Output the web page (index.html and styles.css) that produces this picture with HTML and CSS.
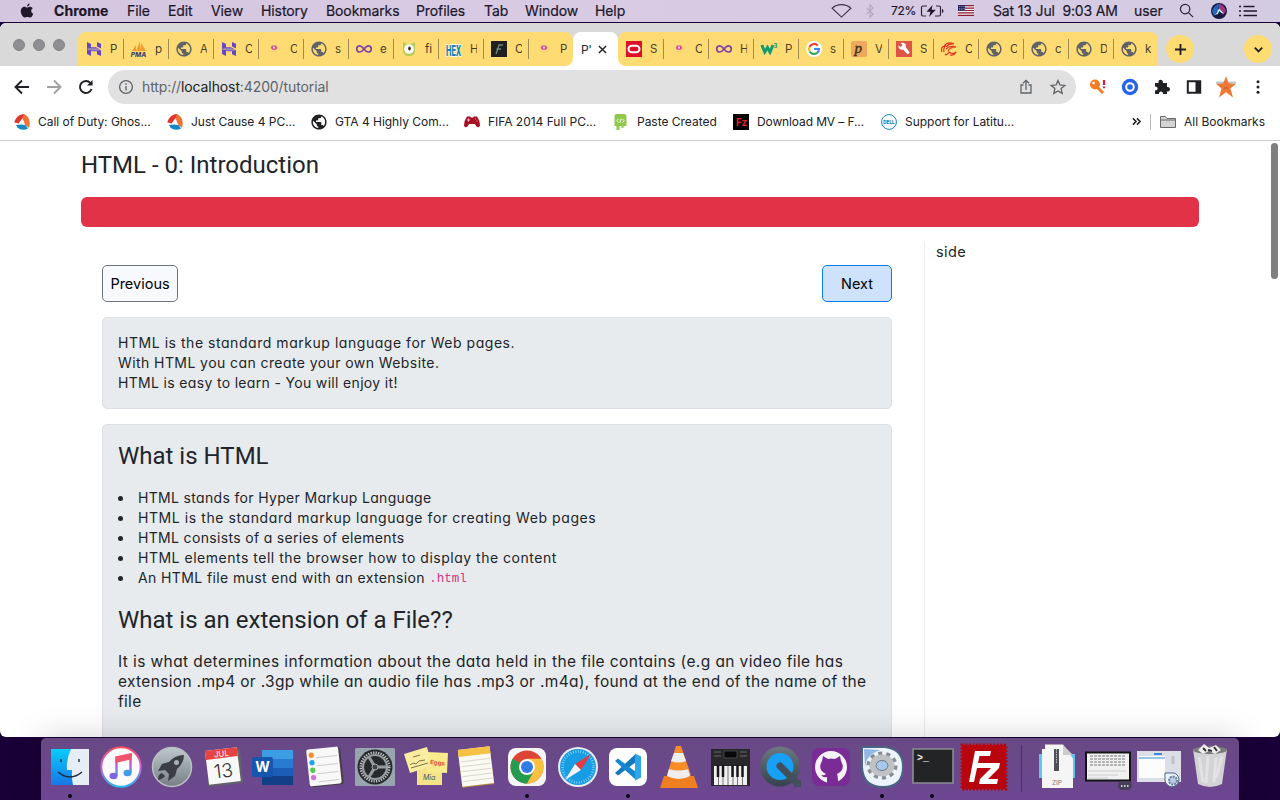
FILE: index.html
```html
<!DOCTYPE html>
<html lang="en">
<head>
<meta charset="utf-8">
<title>Tutorial</title>
<link rel="stylesheet" href="styles.css">
</head>
<body>
<svg class="defs" aria-hidden="true">
  <symbol id="globe" viewBox="1.500 1.500 21 21"><path fill="currentColor" d="M12 2C6.480 2 2 6.480 2 12s4.480 10 10 10 10-4.480 10-10S17.520 2 12 2zm-1 17.930c-3.950-.490-7-3.850-7-7.930 0-.620.080-1.210.210-1.790L9 15v1c0 1.100.900 2 2 2v1.930zm6.900-2.540c-.260-.810-1-1.390-1.900-1.390h-1v-3c0-.550-.450-1-1-1H8v-2h2c.550 0 1-.450 1-1V7h2c1.100 0 2-.900 2-2v-.410c2.930 1.190 5 4.060 5 7.410 0 2.080-.800 3.970-2.100 5.390z"/></symbol>
  <symbol id="hostinger" viewBox="0 0 16 16"><path fill="#6747c7" d="M1 1l4 2v3.200h5L14 8.400H1zM11 1l4 1.800V7.600l-4-2zM1 9l13 .1-3-.1h4v6l-4-1.800v-3H6L1 8.400zM1 9h4v6l-4-2z"/><path d="M1 7.200h10l4 2.200H6z" fill="#9b8cba"/></symbol>
  <symbol id="pink" viewBox="0 0 16 16"><path d="M6 4.500h4l1.400 2.300-1.300 1.900H6L4.700 6.700z" fill="#d84aa6"/><circle cx="8" cy="6.600" r="1.100" fill="#ffe9a0"/><path d="M4.500 10.600h7" stroke="#f8cc80"/></symbol>
  <symbol id="loop" viewBox="0 0 16 16"><path d="M8 8C6.400 5.600 5.200 4.800 3.800 4.800a3 3 0 0 0 0 6.200C5.400 11 6.400 10 8 8s2.600-3.200 4.200-3.200a3 3 0 0 1 0 6.200C10.700 11 9.600 10.400 8 8z" fill="none" stroke="#7b43a5" stroke-width="1.700"/></symbol>
  <symbol id="triple" viewBox="0 0 16 16"><path d="M10 0C5 .5 1.500 3.500 .3 8.500L5 9.500 9.500 4z" fill="#e2362d"/><path d="M10 0c4.500 2 7 7 5 14L11 10.500 8.500 4z" fill="#ef7134"/><path d="M2 11c2 5 8 6 12 3.500L11.500 11 7 10.500z" fill="#1589c6"/><path d="M8.500 4l1 6.500L5 9z" fill="#fff"/></symbol>
</svg>

<header class="menubar">
  <svg class="apple" viewBox="0 0 14 17"><path d="M9.900.5C10 2 8.500 3.700 7 3.700 6.900 2.200 8.400.7 9.900.5zM7.200 4.700c.8 0 1.700-.8 3.100-.8 1 0 2.200.6 2.900 1.600-2.500 1.500-2.100 4.800.5 5.800-.7 1.900-2.100 4.200-3.500 4.200-1 0-1.500-.6-2.800-.6s-1.800.6-2.700.6C2.700 15.500.4 11.800.4 8.600c0-3 1.900-4.700 3.800-4.700 1.300 0 2.200.8 3 .8z"/></svg>
  <nav class="menus"><b>Chrome</b><span>File</span><span>Edit</span><span>View</span><span>History</span><span>Bookmarks</span><span>Profiles</span><span>Tab</span><span>Window</span><span>Help</span></nav>
  <div class="status">
    <svg class="wifi" viewBox="0 0 22 16"><path d="M1 5.500c5.500-5 14.500-5 20 0L11 15z"/></svg>
    <svg class="bt" viewBox="0 0 10 16"><path d="M1 4.500l7.500 7L5 15V1l3.500 3.500L1 11.500"/></svg>
    <span class="pct">72%</span>
    <svg class="batt" viewBox="0 0 24 14"><path d="M7 2H3Q1.500 2 1.500 3.500v7Q1.500 12 3 12h3M16 2h3q1.500 0 1.500 1.500v7q0 1.500-1.500 1.500h-4" fill="none" stroke="#30243c" stroke-width="1.200"/><path d="M12.500 1L6.500 7.800h4L9 13l6.800-7.300h-4.200zM22 5v4q1.500-.5 1.500-2T22 5z" fill="#20172b"/></svg>
    <svg class="flag" viewBox="0 0 16 11"><path d="M0 0h16v11H0z" fill="#f4eef0"/><path d="M0 .7h16M0 3.100h16M0 5.500h16M0 7.900h16M0 10.300h16" stroke="#8e1d35" stroke-width="1.200"/><path d="M0 0h7v6H0z" fill="#28275c"/><path d="M1 1.500h6M1 3.500h6M1 5h6" stroke="#c9c6dc" stroke-width=".7" stroke-dasharray=".8 1"/></svg>
    <span class="date">Sat 13 Jul&nbsp; 9:03 AM</span><span class="user">user</span>
    <svg class="search" viewBox="0 0 16 16"><circle cx="6.500" cy="6.500" r="5"/><path d="M10.200 10.200L15 15"/></svg>
    <svg class="siri" viewBox="0 0 16 16"><circle cx="8" cy="8" r="8" fill="#19183f"/><path d="M1 8C3 3 6 1 8 1l-1 7-4 5z" fill="#2468bc"/><path d="M8 1c4 0 6 4 7 7l-3 4-4-5z" fill="#a33283"/><path d="M3.500 12q3-2 3.500-5l1.200-1.500L10 7.500l3 3-3-.8L8.300 8 7 11z" fill="#bdf1ee"/></svg>
    <svg class="list" viewBox="0 0 18 12"><path d="M0 1.500h2M0 6h2M0 10.500h2M4.500 1.500h11M4.500 6h13.500M4.500 10.500h13.500"/></svg>
  </div>
</header>

<main class="window">
  <div class="tabstrip">
    <div class="lights"><i></i><i></i><i></i></div>
    <div class="tabs left">
      <div class="tab"><svg><use href="#hostinger"/></svg><span>P</span></div>
      <div class="tab"><svg viewBox="0 0 16 16"><path d="M1 10l4-6v6zM5 10l4-10v10zM9 10l1-8 5 8z" fill="#f29b31"/><text x="-.2" y="15.500" font-size="6.500" font-weight="800" font-style="italic" fill="#3f4270">PMA</text></svg><span>p</span></div>
      <div class="tab"><svg><use href="#globe"/></svg><span>A</span></div>
      <div class="tab"><svg><use href="#hostinger"/></svg><span>C</span></div>
      <div class="tab"><svg><use href="#pink"/></svg><span>C</span></div>
      <div class="tab"><svg><use href="#globe"/></svg><span>s</span></div>
      <div class="tab"><svg><use href="#loop"/></svg><span>e</span></div>
      <div class="tab"><svg viewBox="0 0 16 16"><path d="M2 1l4 2h4l4-2v8q0 6-6 6T2 9z" fill="#b6cb57"/><circle cx="8" cy="8" r="4.800" fill="#fff"/><ellipse cx="8.500" cy="7.500" rx="1.300" ry="2" fill="#252d20"/></svg><span>fi</span></div>
      <div class="tab"><svg viewBox="0 0 16 16"><text transform="translate(0 15) scale(.6 1.250)" font-size="12" font-weight="800" fill="#147eb5" stroke="#fff" stroke-width="1.300" paint-order="stroke">HEX</text></svg><span>H</span></div>
      <div class="tab"><svg viewBox="0 0 16 16"><path d="M0 0h16v16H0z" fill="#202020"/><path d="M5 13l3-9h4M5.500 8H10" fill="none" stroke="#718b76" stroke-width="1.300"/></svg><span>C</span></div>
      <div class="tab"><svg><use href="#pink"/></svg><span>P</span></div>
    </div>
    <div class="tab-active"><span>P'</span><svg viewBox="0 0 10 10"><path d="M1 1l8 8M9 1L1 9"/></svg></div>
    <div class="tabs right">
      <div class="tab"><svg viewBox="0 0 16 16"><path d="M0 0h16v16H0z" fill="#dc1026"/><rect x="2.500" y="4.700" width="11" height="6.600" rx="3.300" fill="none" stroke="#fff" stroke-width="2"/></svg><span>S</span></div>
      <div class="tab"><svg><use href="#pink"/></svg><span>C</span></div>
      <div class="tab"><svg><use href="#loop"/></svg><span>H</span></div>
      <div class="tab"><svg viewBox="0 0 16 16"><path d="M.8 4l3 7L6.500 6.500 9 11l3-7" fill="none" stroke="#109b70" stroke-width="3"/><text x="12.500" y="6.500" font-size="6" font-weight="700" fill="#109b70">3</text></svg><span>P</span></div>
      <div class="tab"><svg viewBox="0 0 16 16"><circle cx="8" cy="8" r="8" fill="#fff"/><g fill="none" stroke-width="2.200"><path d="M11.700 4.500A5 5 0 0 0 3.500 6" stroke="#e94335"/><path d="M3.500 6a5 5 0 0 0 .2 4.500" stroke="#fbbc05"/><path d="M3.700 10.500a5 5 0 0 0 7.500 1.300" stroke="#34a853"/><path d="M11.200 11.800A5 5 0 0 0 13 8H8" stroke="#4285f4"/></g></svg><span>s</span></div>
      <div class="tab"><svg viewBox="0 0 16 16"><rect width="16" height="16" rx="2" fill="#efa75e"/><text x="3.500" y="11.500" font-size="15" font-style="italic" font-family="Liberation Serif, serif" fill="#3e3222" stroke="#3e3222" stroke-width=".4">p</text></svg><span>V</span></div>
      <div class="tab"><svg viewBox="0 0 16 16"><path d="M0 0h16v16H0z" fill="#e05448"/><path d="M2.500 4.500L5 6l1.500-2-2-2C9 .5 10.500 4 9.700 6l4 5.500-2 2L7 8.500C4 9.500 2 7 2.500 4.500z" fill="#fff"/></svg><span>S</span></div>
      <div class="tab"><svg viewBox="0 0 16 16"><path d="M3 5Q7 0 13 3 8 2 5 6M1 11Q-1 6 4 5 2 8 3 11M5 8q4-4 10-2-6 0-8 4M4 13q2 2 4-2 4 3 7 0-2 4-6 3" fill="none" stroke="#e23420" stroke-width="1.200"/></svg><span>C</span></div>
      <div class="tab"><svg><use href="#globe"/></svg><span>C</span></div>
      <div class="tab"><svg><use href="#globe"/></svg><span>c</span></div>
      <div class="tab"><svg><use href="#globe"/></svg><span>D</span></div>
      <div class="tab"><svg><use href="#globe"/></svg><span>k</span></div>
    </div>
    <button class="round plus"><svg viewBox="0 0 14 14"><path d="M7 1v12M1 7h12"/></svg></button>
    <button class="round chev"><svg viewBox="0 0 14 14"><path d="M3 5l4 4 4-4"/></svg></button>
  </div>

  <div class="toolbar">
    <svg class="nav" viewBox="0 0 16 16"><path d="M15 8H2M8 1.500L1.500 8 8 14.500"/></svg>
    <svg class="nav dim" viewBox="0 0 16 16"><path d="M1 8h13M8 1.500L14.500 8 8 14.500"/></svg>
    <svg class="nav" viewBox="0 0 16 16"><path d="M13.600 10A6 6 0 1 1 12.500 4L14 5.500"/><path d="M14.500 1v5.500H9z" fill="#202124" stroke="none"/></svg>
    <div class="omnibox">
      <svg class="info" viewBox="0 0 16 16"><circle cx="8" cy="8" r="6.400"/><path d="M8 7v4.500M8 4.300V6"/></svg>
      <span class="url">http://<em>localhost</em>:4200/tutorial</span>
      <svg class="share" viewBox="0 0 16 16"><path d="M5.500 6H3v8h10V6h-2.500M8 11V1.500M5 4.300l3-3 3 3"/></svg>
      <svg class="star" viewBox="0 0 16 16"><path d="M8 1.500l1.900 4.500 4.900.400-3.700 3.200 1.100 4.800L8 11.900l-4.200 2.500 1.100-4.800L1.200 6.400 6.100 6z"/></svg>
    </div>
    <div class="ext">
      <svg viewBox="0 0 18 18"><circle cx="6" cy="6.500" r="5" fill="#f57d26"/><circle cx="4.500" cy="5" r="1.300" fill="#fff"/><path d="M8 9l6 6" stroke="#f57d26" stroke-width="3"/><path d="M15 2v5M15 8.500v1.800" stroke="#d51c3a" stroke-width="2.200"/></svg>
      <svg viewBox="0 0 18 18"><circle cx="9" cy="9" r="8.200" fill="#2864e8"/><circle cx="9" cy="9" r="3.800" fill="none" stroke="#fff" stroke-width="2"/></svg>
      <svg viewBox="0 0 18 18"><path d="M2 5h3.500c-1-4.500 5-4.500 4.500 0h4v4c4-1 4 5 0 4.500V16h-4c.5-3.500-4.500-3.500-4 0H2v-3.500c3.500 0 3.500-4 0-4z" fill="#202124"/></svg>
      <svg viewBox="0 0 18 18"><path d="M2.800 3.300h12.400v11.400H2.800z" fill="#fff" stroke="#202124" stroke-width="2"/><path d="M10.500 3h5v12h-5z" fill="#202124"/></svg>
      <svg class="patrick" viewBox="0 0 22 22"><path d="M1 5.500h20v2H1z" fill="#b5cbd1"/><path d="M11 0l2.700 7.200 7.300.600-5.600 4.800L18 21.500l-7-5.300-7 5.300 2.500-8.900L1 7.800l7.300-.600z" fill="#ef7836"/><path d="M9 12h4" stroke="#ae5b3e"/></svg>
      <svg viewBox="0 0 18 18"><g fill="#202124"><circle cx="9" cy="3.700" r="1.500"/><circle cx="9" cy="9" r="1.500"/><circle cx="9" cy="14.300" r="1.500"/></g></svg>
    </div>
  </div>

  <div class="bookmarks">
    <div><svg><use href="#triple"/></svg><span>Call of Duty: Ghos...</span></div>
    <div><svg><use href="#triple"/></svg><span>Just Cause 4 PC...</span></div>
    <div class="dark"><svg><use href="#globe"/></svg><span>GTA 4 Highly Com...</span></div>
    <div><svg viewBox="0 0 16 16"><path d="M3 2.500h3l1 1h2l1-1h3q3 4 3 9c-1.500 3.500-4 1-5-1.500H5C4 12.500 1.500 15 0 11.500q0-5 3-9z" fill="#a80f22"/><path d="M3 6h3M4.500 4.500v3" stroke="#f5c9ce"/><path d="M11 5h1M12.500 7h1" stroke="#e6a4ac" stroke-width="1.200"/></svg><span>FIFA 2014 Full PC...</span></div>
    <div><svg viewBox="0 0 16 16"><path d="M3.500 0h8q2 0 2 2v10h-3v2H8.500v-2h-2v4h-3v-4h-2V2q0-2 2-2z" fill="#91c94e"/><path d="M5.500 5L3.800 6.800 5.500 8.500M9.500 5l1.700 1.800L9.500 8.500M8.200 4.500L6.800 9" fill="none" stroke="#f3fae9"/></svg><span>Paste Created</span></div>
    <div><svg viewBox="0 0 16 16"><path d="M0 0h16v16H0z"/><text x="3" y="12" font-size="10" font-weight="700" fill="#e8202b" textLength="11" lengthAdjust="spacingAndGlyphs">Fz</text></svg><span class="mv">Download MV – F...</span></div>
    <div><svg viewBox="0 0 16 16"><circle cx="8" cy="8" r="7.400" fill="#fff" stroke="#1686b8"/><text x="2.200" y="9.800" font-size="5" font-weight="800" fill="#1686b8" textLength="11.600" lengthAdjust="spacingAndGlyphs">DELL</text></svg><span>Support for Latitu...</span></div>
    <div class="all"><svg class="more" viewBox="0 0 10 10"><path d="M1 1.500L4.500 5 1 8.500M5.500 1.500L9 5 5.500 8.500"/></svg><i></i><svg class="folder" viewBox="0 0 16 14"><path d="M.5 12.500v-11h5l1.500 2h8.500v9zM.5 5h15" fill="#d4d4d4" stroke="#686868"/></svg><span>All Bookmarks</span></div>
  </div>

  <section class="page">
    <h1>HTML - 0: Introduction</h1>
    <div class="banner"></div>
    <div class="columns">
      <article>
        <div class="pager"><button class="prev">Previous</button><button class="next">Next</button></div>
        <div class="card intro"><p><span>HTML is the standard markup language for Web pages.</span><span>With HTML you can create your own Website.</span><span>HTML is easy to learn - You will enjoy it!</span></p></div>
        <div class="card body">
          <h2>What is HTML</h2>
          <ul>
            <li>HTML stands for Hyper Markup Language</li>
            <li>HTML is the standard markup language for creating Web pages</li>
            <li>HTML consists of a series of elements</li>
            <li>HTML elements tell the browser how to display the content</li>
            <li>An HTML file must end with an extension <code>.html</code></li>
          </ul>
          <h2>What is an extension of a File??</h2>
          <p class="big"><span>It is what determines information about the data held in the file contains (e.g an video file has</span><span>extension .mp4 or .3gp while an audio file has .mp3 or .m4a), found at the end of the name of the</span><span>file</span></p>
        </div>
      </article>
      <aside>side</aside>
    </div>
    <div class="scrollbar"></div>
  </section>
</main>

<footer class="dock">
  <div class="app run"><svg viewBox="0 0 44 44"><defs><linearGradient id="fb" x2="0" y2="1"><stop stop-color="#08cdf9"/><stop offset="1" stop-color="#1977e8"/></linearGradient></defs><path d="M3 4h38v36H3z" fill="#e7edf4"/><path d="M3 4h20q-5 10-4 21h5q-.5 8 1 15H3z" fill="url(#fb)"/><path d="M13 14v3M31 14v3M10 27q12 10 24 0" fill="none" stroke="#1c2a3d" stroke-width="1.400"/></svg></div>
  <div class="app"><svg viewBox="0 0 44 44"><defs><linearGradient id="mu" x2="0" y2="1"><stop stop-color="#fb4c5e"/><stop offset=".5" stop-color="#c85ed7"/><stop offset="1" stop-color="#26b8ee"/></linearGradient></defs><circle cx="22" cy="22" r="19.700" fill="#fafafa" stroke="url(#mu)" stroke-width="2"/><path d="M17.500 31V12.500l14-3V28" fill="none" stroke="url(#mu)" stroke-width="2.500"/><path d="M16.300 12l16.500-3.800v6L16.300 18z" fill="#f0566f"/><ellipse cx="14.500" cy="31" rx="4" ry="3.200" fill="#8066dd"/><ellipse cx="28.500" cy="28" rx="4" ry="3.200" fill="#419be8"/></svg></div>
  <div class="app"><svg viewBox="0 0 44 44"><defs><linearGradient id="la" x2="0" y2="1"><stop stop-color="#bdc9cd"/><stop offset="1" stop-color="#777f82"/></linearGradient></defs><circle cx="22" cy="22" r="19.500" fill="url(#la)" stroke="#b9bec2" stroke-width="1.500"/><path d="M34 10q-9 0-15 7l-7 2-4 7 7-1 4 4-1 7 7-5 2-7q7-6 7-14zM12 28q-4 1-4 7 5-1 7-4z" fill="#3b3e42"/><circle cx="26.500" cy="17.500" r="2.500" fill="#a8b2b5"/></svg></div>
  <div class="app"><svg viewBox="0 0 44 44"><g transform="rotate(-7 22 22)"><path d="M7 6h34l-1 34H5z" fill="#616369"/><path d="M6 4h32v34H6z" fill="#f8f8f8"/><path d="M6 4h32v9H6z" fill="#e64443"/><text x="22" y="11.500" text-anchor="middle" font-size="8" fill="#fff">JUL</text><text x="22" y="32.500" text-anchor="middle" font-size="19" font-weight="300" fill="#353535">13</text></g></svg></div>
  <div class="app"><svg viewBox="0 0 44 44"><path d="M11 5h31v9H11z" fill="#3c9de5"/><path d="M11 14h31v9H11z" fill="#297ad1"/><path d="M11 23h31v8H11z" fill="#1b5db7"/><path d="M11 31h31v9H11z" fill="#123f86"/><rect x="1" y="12" width="21" height="20" rx="2" fill="#1756ae"/><text x="11.500" y="27" text-anchor="middle" font-size="14" font-weight="700" fill="#fff">W</text></svg></div>
  <div class="app"><svg viewBox="0 0 44 44"><g transform="rotate(-6 22 22)"><rect x="7" y="4" width="33" height="37" rx="2" fill="#454046"/><rect x="6" y="3" width="32" height="37" rx="2" fill="#f8f8f8"/><path d="M15 12h21M15 20h21M15 28h21M15 36h21" stroke="#ccc"/><circle cx="10.500" cy="9" r="2.700" fill="#f58e2e"/><circle cx="10.500" cy="16.500" r="2.700" fill="#21a5e8"/><circle cx="10.500" cy="24" r="2.700" fill="#53ca4c"/><circle cx="10.500" cy="31.500" r="2.700" fill="#cb75db"/></g></svg></div>
  <div class="app"><svg viewBox="0 0 44 44"><rect x="2" y="3" width="40" height="38" rx="1.500" fill="#99a5ae"/><circle cx="22" cy="22" r="17.500" fill="#262a2d"/><circle cx="22" cy="22" r="14.300" fill="none" stroke="#c3c6c8" stroke-width="2.500" stroke-dasharray="1.300 1.200"/><circle cx="22" cy="22" r="12" fill="none" stroke="#9a9ea1" stroke-width="2.200"/><path d="M22 22l-6-10M22 22h12M22 22l-6 10" stroke="#999da0" stroke-width="3"/><circle cx="22" cy="22" r="3" fill="#444" stroke="#aaa"/></svg></div>
  <div class="app"><svg viewBox="0 0 44 44"><path d="M13 22h25v18H13z" fill="#f4e487"/><path d="M23 7l21 1-1 20-20-1z" fill="#f8eb8d"/><path d="M0 9l23-7 5 19-22 7z" fill="#faeca1"/><path d="M9 12l7-2M6 20l3-2 3 1 3-3 6-1M7 23l17-5" fill="none" stroke="#797248"/><text x="26" y="19" font-size="6" font-weight="700" fill="#e64b31" transform="rotate(6 26 19)">Eggs</text><text x="19" y="35" font-size="7" font-style="italic" fill="#47536d">Mia</text></svg></div>
  <div class="app"><svg viewBox="0 0 44 44"><g transform="rotate(-7 22 22)"><path d="M6 5h32v36H6z" fill="#b28a3c"/><path d="M6 3h32v37H6z" fill="#fbfaf2"/><path d="M6 3h32v7H6z" fill="#f5c142"/><path d="M7 15h30M7 20h30M7 25h30M7 30h30M7 35h30" stroke="#d9d7ce"/></g></svg></div>
  <div class="app run"><svg viewBox="0 0 44 44"><rect x="3" y="3" width="38" height="38" rx="8" fill="#f5f5f5"/><circle cx="22" cy="22" r="16.500" fill="#df4537"/><path d="M22 22L7.700 13.800A16.500 16.500 0 0 0 22 38.500L29 26z" fill="#249c50"/><path d="M22 22l7 4-7 12.500A16.500 16.500 0 0 0 36.300 13.800H22z" fill="#f9c13d"/><circle cx="22" cy="22" r="8" fill="#fff"/><circle cx="22" cy="22" r="6" fill="#317be4"/></svg></div>
  <div class="app"><svg viewBox="0 0 44 44"><circle cx="22" cy="22" r="20" fill="#e9edf1"/><circle cx="22" cy="22" r="18" fill="#189de5"/><circle cx="22" cy="22" r="15.500" fill="none" stroke="#91daf7" stroke-width="2.500" stroke-dasharray=".8 1.700"/><path d="M35 9L19 19l6 6z" fill="#e5393e"/><path d="M9 35l10-16 6 6z" fill="#f2f4f5"/></svg></div>
  <div class="app run"><svg viewBox="0 0 44 44"><rect x="3" y="3" width="38" height="38" rx="8" fill="#fff"/><path d="M29 9.500L9 28l3 2.500 18-13.500z" fill="#1579bd"/><path d="M9 16l3-2.500L30 27v8z" fill="#1686cf"/><path d="M29 8.500l6 3v21l-6 3z" fill="#2ca5e9"/></svg></div>
  <div class="app"><svg viewBox="0 0 44 44"><path d="M7 31h30l4 12H3z" fill="#f07f22"/><path d="M19 1h5l10 29q-12 8-24 0z" fill="#f78c28"/><path d="M17 8h9l3 8q-7 3-15 0zM12 24q9 3 19 0l2 7q-11 6-23 0z" fill="#eee"/></svg></div>
  <div class="app"><svg viewBox="0 0 44 44"><path d="M3 4h39v37H3z" fill="#28282b"/><path d="M6 21h33v19H6z" fill="#f0f0f0"/><path d="M10.500 21v19M15 21v19M20 21v19M25 21v19M29.500 21v19M34.500 21v19" stroke="#777"/><path d="M10 20v12M15 20v12M24.500 20v12M29.500 20v12M34.500 20v12" stroke="#171717" stroke-width="2.500"/><path d="M16 6h13v7H16z" fill="#08080a" stroke="#444"/><path d="M6 7h7M6 11h7M32 7h7M32 11h7" stroke="#484848" stroke-width="2"/></svg></div>
  <div class="app"><svg viewBox="0 0 44 44"><defs><linearGradient id="qt" x2="0" y2="1"><stop stop-color="#6d7880"/><stop offset="1" stop-color="#35424d"/></linearGradient></defs><circle cx="21" cy="21.500" r="20" fill="url(#qt)"/><circle cx="21" cy="21.500" r="13.500" fill="#18a0f6"/><path d="M21 21l17 17" stroke="#434f5a" stroke-width="7" stroke-linecap="round"/><path d="M35 35h7v7h-7z" fill="#434f5a"/></svg></div>
  <div class="app"><svg viewBox="0 0 44 44"><rect x="3" y="3" width="38" height="38" rx="7" fill="#7a2b96"/><circle cx="22" cy="22" r="16" fill="#f6f2f8"/><path d="M18 38v-6q-4 1-6-2 3 1 5-1-9-4-4-13l1-5 5 3q3-1 7 0l5-3 1 5q5 9-4 13 1 2 1 9z" fill="#7a2b96"/></svg></div>
  <div class="app run"><svg viewBox="0 0 44 44"><path d="M2 2h23q18 2 18 20 0 20-20 20Q3 42 2 22z" fill="#edf3fa" stroke="#496582" stroke-width="2"/><path d="M4 4l16 1Q6 10 5 22z" fill="#92b7e5"/><ellipse cx="22" cy="20.500" rx="13.500" ry="12" fill="none" stroke="#858b90" stroke-width="4" stroke-dasharray="4 4"/><ellipse cx="22" cy="20.500" rx="9.500" ry="8" fill="#c4daf3" stroke="#bfc2c5" stroke-width="6"/><ellipse cx="22" cy="20.500" rx="6" ry="5" fill="#a9c6eb" stroke="#6d7780"/></svg></div>
  <div class="app run"><svg viewBox="0 0 44 44"><path d="M2 4h40v34H2z" fill="#232425" stroke="#8b8c91" stroke-width="1.600"/><text x="6" y="16" font-size="10" font-weight="700" font-family="Liberation Mono, monospace" fill="#eee">&gt;_</text></svg></div>
  <div class="app"><svg class="fz" viewBox="0 0 48 48"><path d="M2 2h44v44H2z" fill="#b8050d" stroke="#b8050d" stroke-width="3" stroke-dasharray="2 1.500"/><path d="M9 39l6-31h16l-1 5H19.500L18 20h9l-1 5h-9l-3 14zM23 20h17l-1 5-11 11h10l-1 5H19l1-5 11-11h-9z" fill="#fff"/></svg></div>
  <div class="rule"></div>
  <div class="app wide"><svg viewBox="0 0 44 44"><path d="M4 9h36v24H4z" fill="#5cc6ed"/><path d="M10-.5h18l10 14V43H7V4h3z" fill="#f5f5f5"/><path d="M28 0v10h10z" fill="#ccc"/><path d="M19 4h5v22h-5z" fill="#4e5254"/><path d="M21.500 4v14" stroke="#bbb" stroke-dasharray="1.500 1"/><text x="22" y="40" text-anchor="middle" font-size="6.500" fill="#777">ZIP</text></svg></div>
  <div class="app wide"><svg class="shot" viewBox="0 0 48 44"><path d="M2 7.500h44v28H2z" fill="#f0f0f0" stroke="#141414" stroke-width="2"/><path d="M6 11h36M6 14h36M6 17h36M6 20h36" stroke="#b5b5b5" stroke-width="2" stroke-dasharray="3 1"/><path d="M4 26h38M4 30h30M4 33h20" stroke="#ccc"/><rect x="34" y="36" width="14" height="9" rx="4.500" fill="#493e58"/><path d="M37 41h8" stroke="#fff" stroke-width="1.300" stroke-dasharray="1.500 1.500"/></svg></div>
  <div class="app wide"><svg class="shot" viewBox="0 0 48 44"><path d="M2 6h44v31H2z" fill="#dcdfe5"/><path d="M4 11h26v22H4z" fill="#fcfcfd"/><path d="M19 9h8" stroke="#3d89de" stroke-width="2"/><path d="M4 13h26" stroke="#9ac4e8" stroke-width="2"/><path d="M38 11v8" stroke="#bbc0c8" stroke-width="3"/><path d="M30 28h9a7 7 0 1 1-9 7z" fill="#edf4fa" stroke="#486486"/><circle cx="38" cy="35.500" r="4" fill="#b5cce7" stroke="#6b7d91" stroke-width="2" stroke-dasharray="2 1"/></svg></div>
  <div class="app wide"><svg viewBox="0 0 44 44"><path d="M5 4h34l-5 35q-12 6-24 0z" fill="#d3d2d4"/><ellipse cx="22" cy="5" rx="17" ry="4" fill="#79797b"/><path d="M10 5l6-6 5 4 7-3 5 5-6 4-6-3-6 3z" fill="#eee"/><path d="M15 3l3 3M26 2l3 4M20 5l4 1" stroke="#333" stroke-width="2"/><path d="M11 12l4 25M20 11l-2 27M28 13l-2 24M34 11l-6 22" stroke="#e2e1e3" stroke-width="3"/></svg></div>
</footer>
</body>
</html>
```

FILE: styles.css
```css
* { box-sizing: border-box; }
body {
  margin: 0; width: 1280px; height: 800px; overflow: hidden;
  display: flex; flex-direction: column; align-items: center;
  background: #190137; color: #212529;
  font-family: Inter, "Liberation Sans", sans-serif;
}
svg { display: block; flex: none; overflow: visible; }
.defs { position: absolute; width: 0; height: 0; }
button { font: inherit; padding: 0; }

/* Menu bar */
.menubar {
  width: 1280px; height: 22px; flex: none; display: flex; align-items: center; padding-bottom: 1px;
  background: linear-gradient(90deg, #d5c6df, #d8cbe3 50%, #d3cbe2); color: #20172b; font-size: 14px;
  -webkit-text-stroke: .2px;
}
.apple { width: 14px; height: 16px; margin-left: 20px; fill: #20172b; }
.menus {
  margin-left: 20px; display: grid; white-space: nowrap;
  grid-template-columns: 73px 41px 43px 50px 65px 90px 68px 41px 70px 40px;
}
.menus b { letter-spacing: .05px; }
.menus span { letter-spacing: -.1px; }
.status { margin-left: auto; display: flex; align-items: center; white-space: nowrap; }
.wifi { width: 21px; height: 15px; fill: none; stroke: #3b3047; stroke-width: 1.2; }
.bt { width: 10px; height: 14px; margin-left: 13px; fill: none; stroke: #afa3bc; stroke-width: 1.2; }
.pct { width: 29px; margin-left: 16px; font-size: 12px; letter-spacing: -.3px; }
.batt { width: 24px; height: 14px; }
.flag { width: 16px; height: 11px; margin-left: 14px; }
.date { width: 126px; margin-left: 19px; letter-spacing: -.15px; }
.user { width: 29px; margin-left: 15px; letter-spacing: -.1px; }
.search { width: 15px; height: 15px; margin-left: 16px; fill: none; stroke: #30243c; stroke-width: 1.3; }
.siri { width: 16px; height: 16px; margin-left: 17px; }
.list { width: 18px; height: 12px; margin: 0 23px 0 12px; stroke: #20172b; stroke-width: 1.6; }

/* Browser window */
.window {
  width: 1280px; height: 714px; margin-top: 1px; flex: none; display: flex; flex-direction: column;
  background: #fff; border-radius: 6px; overflow: hidden;
}
.tabstrip {
  height: 43px; flex: none; display: flex; align-items: flex-end;
  background: linear-gradient(#fff, #fff) 564px 25px / 64px 18px no-repeat, #d9d9d9;
}
.lights { width: 78px; height: 43px; padding-left: 13px; display: flex; gap: 8px; align-items: center; }
.lights i { width: 12px; height: 12px; border-radius: 50%; background: #8f8e93; border: 1px solid #838287; }
.tabs { height: 34px; display: flex; background: #ffdc73; border-radius: 8px; }
.left { border-bottom-left-radius: 0; }
.right { border-bottom-right-radius: 0; }
.tab { width: 45px; height: 34px; display: flex; align-items: center; padding-left: 8px; position: relative; }
.tab svg { width: 16px; height: 16px; color: #5f6368; }
.tab span { width: 7px; margin-left: 8px; overflow: hidden; font-size: 11.5px; color: #45402c; white-space: nowrap; }
.tab + .tab::before { content: ""; position: absolute; left: 0; top: 7px; width: 1px; height: 20px; background: #a08b50; }
.tab-active {
  width: 45px; height: 34px; display: flex; align-items: center; gap: 8px; padding-left: 8px;
  background: #fff; border-radius: 8px 8px 0 0; font-size: 12px;
}
.tab-active span { width: 10px; white-space: nowrap; letter-spacing: -.3px; }
.tab-active svg { width: 9px; height: 9px; margin-left: -1px; stroke: #202124; stroke-width: 1.6; }
.round {
  width: 28px; height: 28px; border: 0; border-radius: 50%; background: #ffdc73;
  display: grid; place-items: center; margin-bottom: 3px;
}
.round svg { width: 13px; height: 13px; fill: none; stroke: #202124; stroke-width: 2; }
.plus { margin-left: 8px; }
.chev { margin-left: auto; margin-right: 8px; }

.toolbar { height: 42px; flex: none; display: flex; align-items: center; }
.nav { width: 16px; height: 16px; margin-left: 14px; margin-right: 2px; fill: none; stroke: #202124; stroke-width: 1.9; }
.dim { stroke: #a0a0a0; }
.omnibox {
  width: 968px; height: 34px; margin-left: 12px; border-radius: 17px; background: #e1e1e1;
  display: flex; align-items: center; padding: 0 10px;
}
.omnibox svg { width: 16px; height: 16px; fill: none; stroke: #5f6368; stroke-width: 1.3; }
.url { margin-left: 8px; margin-top: -1px; font-size: 14px; color: #5f6368; letter-spacing: -.11px; }
.url em { font-style: normal; color: #202124; }
.omnibox .share { margin-left: auto; }
.omnibox .star { margin-left: 16px; }
.ext { display: flex; align-items: center; gap: 14px; margin-left: 13px; }
.ext svg { width: 18px; height: 18px; }
.ext .patrick { width: 22px; height: 22px; margin: 0 -2px; }

.bookmarks {
  height: 33px; flex: none; border-bottom: 1px solid #cacaca; padding: 0 15px 5px 14px;
  display: grid; grid-template-columns: 153px 144px 153px 149px 120px 148px 140px 1fr; align-items: center;
  font-size: 12px; color: #202124; white-space: nowrap; letter-spacing: -.02px;
}
.bookmarks div { display: flex; align-items: center; }
.bookmarks svg { width: 16px; height: 16px; }
.bookmarks span { margin-left: 8px; }
.bookmarks .mv { letter-spacing: -.12px; }
.dark { color: #202124; }
.bookmarks .all { justify-content: flex-end; }
.bookmarks .more { width: 9px; height: 9px; fill: none; stroke: #202124; stroke-width: 1.7; }
.all i { width: 1px; height: 16px; background: #bbb; margin: 0 9px; }
.bookmarks .folder { height: 14px; }

/* Page */
.page { position: relative; flex: 1; min-height: 0; overflow: hidden; padding: 9px 81px 0; font-feature-settings: "cv11"; }
h1, h2 { font-family: Roboto, sans-serif; font-size: 24px; font-weight: 400; line-height: 30px; margin: 0; }
.banner { height: 30px; margin: 17px 0 15px; border-radius: 6px; background: #e23247; }
.columns { display: flex; height: 520px; }
article { width: 843px; padding: 23px 32px 0 21px; }
aside { flex: 1; border-left: 1px solid #ebedef; padding: 0 11px; font-size: 14.5px; line-height: 20px; letter-spacing: .4px; }
.pager { display: flex; justify-content: space-between; }
.pager button { height: 37px; border-radius: 5px; color: #000; font-size: 14.5px; }
.prev { width: 76px; background: #f8f9fc; border: 1px solid #6c757d; }
.next { width: 70px; background: #cfe2fc; border: 1px solid #0d78ee; }
.card { background: #e8ebee; border: 1px solid #dce0e4; border-radius: 5px; padding: 15px; margin-top: 15px; }
.card p, .card ul { margin: 0; font-size: 14px; line-height: 20px; letter-spacing: .3px; white-space: nowrap; }
.card p span { display: block; }
.card.body { height: 400px; padding-top: 16px; }
.card ul { padding: 0; list-style: none; margin: 17px 0; }
.card li { height: 20px; display: flex; align-items: center; white-space: pre; }
.card li::before { content: ""; width: 5px; height: 5px; margin-right: 15px; border-radius: 50%; background: #212529; }
.card .big { margin-top: 17px; font-size: 15.5px; }

/* Tracking per line */
.intro span:nth-child(1) { letter-spacing: .54px; }
.intro span:nth-child(2) { letter-spacing: .42px; }
.intro span:nth-child(3) { letter-spacing: .33px; }
.card li:nth-child(1) { letter-spacing: .33px; }
.card li:nth-child(2) { letter-spacing: .58px; }
.card li:nth-child(3) { letter-spacing: .33px; }
.card li:nth-child(4) { letter-spacing: .51px; }
.card li:nth-child(5) { letter-spacing: .39px; }
.big span:nth-child(1) { letter-spacing: .4px; }
.big span:nth-child(2) { letter-spacing: .33px; }
code { padding-top: 2px; color: #d63384; font-family: "Liberation Mono", monospace; font-size: 12.5px; letter-spacing: 0; }
.scrollbar { position: absolute; right: 2px; top: 2px; width: 7px; height: 136px; border-radius: 4px; background: #7f7f7f; }

/* Dock */
.dock {
  position: relative; width: 1198px; height: 62px; margin-top: 1px; flex: none; display: flex; padding: 6px 4px 0;
  background: linear-gradient(#684984, #6d4792); border-radius: 5px 5px 0 0;
  box-shadow: 0 0 34px rgba(0, 0, 0, .18);
}
.app { width: 50.76px; height: 56px; display: flex; justify-content: center; position: relative; }
.app svg { width: 44px; height: 44px; margin-top: .5px; }
.app .fz { width: 48px; height: 48px; margin-top: -1.5px; }
.app .shot { width: 48px; height: 44px; }
.run::after { content: ""; position: absolute; bottom: 2px; left: 23px; width: 4px; height: 4px; border-radius: 50%; background: #0c0710; }
.rule { width: 1px; height: 47px; margin: 1px 10px 0 12px; background: #46305d; }
```
